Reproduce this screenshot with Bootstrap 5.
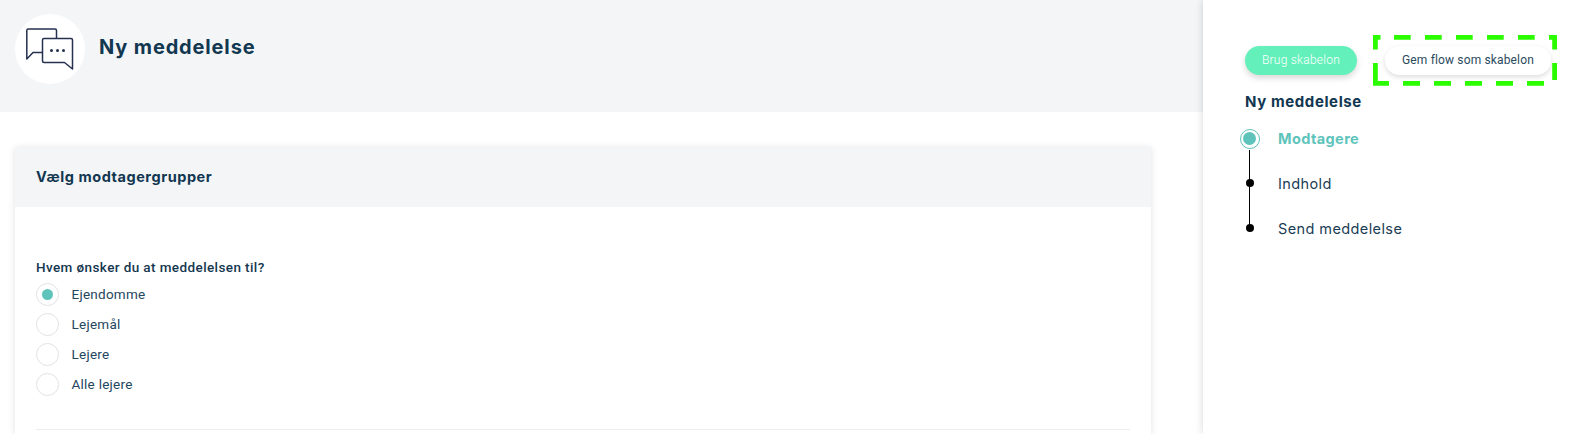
<!DOCTYPE html>
<html lang="da">
<head>
<meta charset="utf-8">
<title>Ny meddelelse</title>
<link href="https://cdn.jsdelivr.net/npm/bootstrap@5.3.0/dist/css/bootstrap.min.css" rel="stylesheet">
<style>
html,body{height:434px;overflow:hidden;background:#fff}
body{font-family:Roboto,sans-serif;color:#15374f}
.shell{height:434px}
.main-pane{width:1203px;flex:none}
.page-head{height:112px;background:#f4f5f7;padding:14px 0 0 15px;gap:14px}
.head-icon{width:70px;height:70px;background:#fff;border-radius:50%}
.head-title,.box-title,.side-title,.step-label{font-family:Inter,"Open Sans",sans-serif;color:#123750}
.head-title{font-size:20px;font-weight:700;letter-spacing:.85px;margin:0 0 32px}
.form-box{width:1136px;margin:35px 0 0 15px;box-shadow:0 1px 7px rgba(0,0,0,.12);height:287px;border-radius:0;border:0}
.box-head{height:60px;background:#f4f5f7;padding-left:21px}
.box-title{font-size:14.5px;font-weight:700;letter-spacing:.55px;margin:0}
.box-body{padding:50px 21px 0}
.ask{font-size:13.5px;font-weight:500;line-height:20px;letter-spacing:.4px;margin-bottom:2px;color:#15374f}
.opt{height:30px;gap:12.500px;font-size:13.5px;letter-spacing:.25px;color:#24465d}
.dot-box{width:23px;height:23px;border:1px solid #e2e2e2;border-radius:50%;flex:none}
.dot-box.on::after{content:"";width:11px;height:11px;border-radius:50%;background:#5ec4bb}
.rule{border-top:1px solid #ececec;margin-top:30px}
.side-pane{flex:1;box-shadow:0 0 8px rgba(0,0,0,.16);padding:46px 0 0 42px;position:relative;z-index:1;background:#fff}
.pill{height:29px;border-radius:15px;font-size:12px;letter-spacing:.25px;padding:0;border:0;line-height:29px}
.pill-green{width:112px;background:#64f0bb;color:#fff;font-weight:300;box-shadow:0 3px 6px rgba(0,0,0,.16)}
.pill-white{width:166px;margin-left:28px;background:#fff;color:#2b4a60;letter-spacing:.15px;box-shadow:0 2px 5px rgba(0,0,0,.14)}
.pill-green:hover{background:#64f0bb;color:#fff}
.side-title{font-size:15px;font-weight:700;letter-spacing:.6px;margin:17px 0 0;line-height:20px}
.steps{margin:4px 0 0 -6.500px;position:relative}
.steps::before{content:"";position:absolute;left:10px;top:34px;height:78px;border-left:1.5px solid #000}
.step{height:45px;gap:17.500px;position:relative}
.mark-slot{width:22px;height:22px;flex:none;position:relative}
.mark-now{width:20px;height:20px;border:1px solid #5ec4bb;border-radius:50%;background:#fff}
.mark-now::after{content:"";width:13px;height:13px;border-radius:50%;background:#5ec4bb}
.mark-dot{width:8px;height:8px;border-radius:50%;background:#000;margin-bottom:1px}
.step-label{font-size:14.5px;letter-spacing:.4px;font-weight:400;color:#1a3c54}
.step-label.now{color:#5ec4bb;font-weight:700}
.dash-frame{position:absolute;left:1373px;top:35px;z-index:2}
</style>
</head>
<body>
<div class="shell d-flex">
  <div class="main-pane">
    <div class="page-head d-flex align-items-start">
      <div class="head-icon d-flex align-items-center justify-content-center">
        <svg width="48" height="43" viewBox="0 0 48 43" fill="none" stroke="#26304f" stroke-width="1.500" stroke-linejoin="round"><path d="M16.500 24.500H7L.8 31V2.500Q.8 1 2.300 1H29Q30.500 1 30.500 2.500V10.500"/><path d="M18 10.500H45Q46.500 10.500 46.500 12V41L38.500 34.500H18Q16.500 34.500 16.500 33V12Q16.500 10.500 18 10.500Z" fill="#fff"/><circle cx="25.500" cy="22.500" r="1.500" fill="#26304f" stroke="none"/><circle cx="31.500" cy="22.500" r="1.500" fill="#26304f" stroke="none"/><circle cx="37.500" cy="22.500" r="1.500" fill="#26304f" stroke="none"/></svg>
      </div>
      <h1 class="head-title align-self-center">Ny meddelelse</h1>
    </div>
    <div class="card form-box">
      <div class="box-head d-flex align-items-center"><h2 class="box-title">Vælg modtagergrupper</h2></div>
      <div class="box-body">
        <div class="ask">Hvem ønsker du at meddelelsen til?</div>
        <div class="opt d-flex align-items-center"><span class="dot-box on d-flex align-items-center justify-content-center"></span>Ejendomme</div>
        <div class="opt d-flex align-items-center"><span class="dot-box"></span>Lejemål</div>
        <div class="opt d-flex align-items-center"><span class="dot-box"></span>Lejere</div>
        <div class="opt d-flex align-items-center"><span class="dot-box"></span>Alle lejere</div>
        <div class="rule"></div>
      </div>
    </div>
  </div>
  <aside class="side-pane">
    <div class="d-flex">
      <button class="btn pill pill-green">Brug skabelon</button>
      <button class="btn pill pill-white">Gem flow som skabelon</button>
    </div>
    <div class="side-title">Ny meddelelse</div>
    <div class="steps">
      <div class="step d-flex align-items-center"><span class="mark-slot d-flex align-items-center justify-content-center"><span class="mark-now d-flex align-items-center justify-content-center"></span></span><span class="step-label now">Modtagere</span></div>
      <div class="step d-flex align-items-center"><span class="mark-slot d-flex align-items-center justify-content-center"><span class="mark-dot"></span></span><span class="step-label">Indhold</span></div>
      <div class="step d-flex align-items-center"><span class="mark-slot d-flex align-items-center justify-content-center"><span class="mark-dot"></span></span><span class="step-label">Send meddelelse</span></div>
    </div>
  </aside>
</div>
<svg class="dash-frame" width="184" height="51" viewBox="0 0 184 51" fill="none" stroke="#2bfd00" stroke-width="4.800"><path d="M0 2.400H7.500M21 2.400H37.700M52 2.400H68.700M83 2.400H99.700M114 2.400H130.700M145 2.400H161.700M176 2.400H184M2.400 0V14.500M2.400 28V50.700M181.600 0V14.500M181.600 28V45M0 48.300H16M30 48.300H47M61 48.300H78M92 48.300H109M123 48.300H140M154 48.300H171"/></svg>
<script src="https://cdn.jsdelivr.net/npm/bootstrap@5.3.0/dist/js/bootstrap.bundle.min.js"></script>
</body>
</html>
